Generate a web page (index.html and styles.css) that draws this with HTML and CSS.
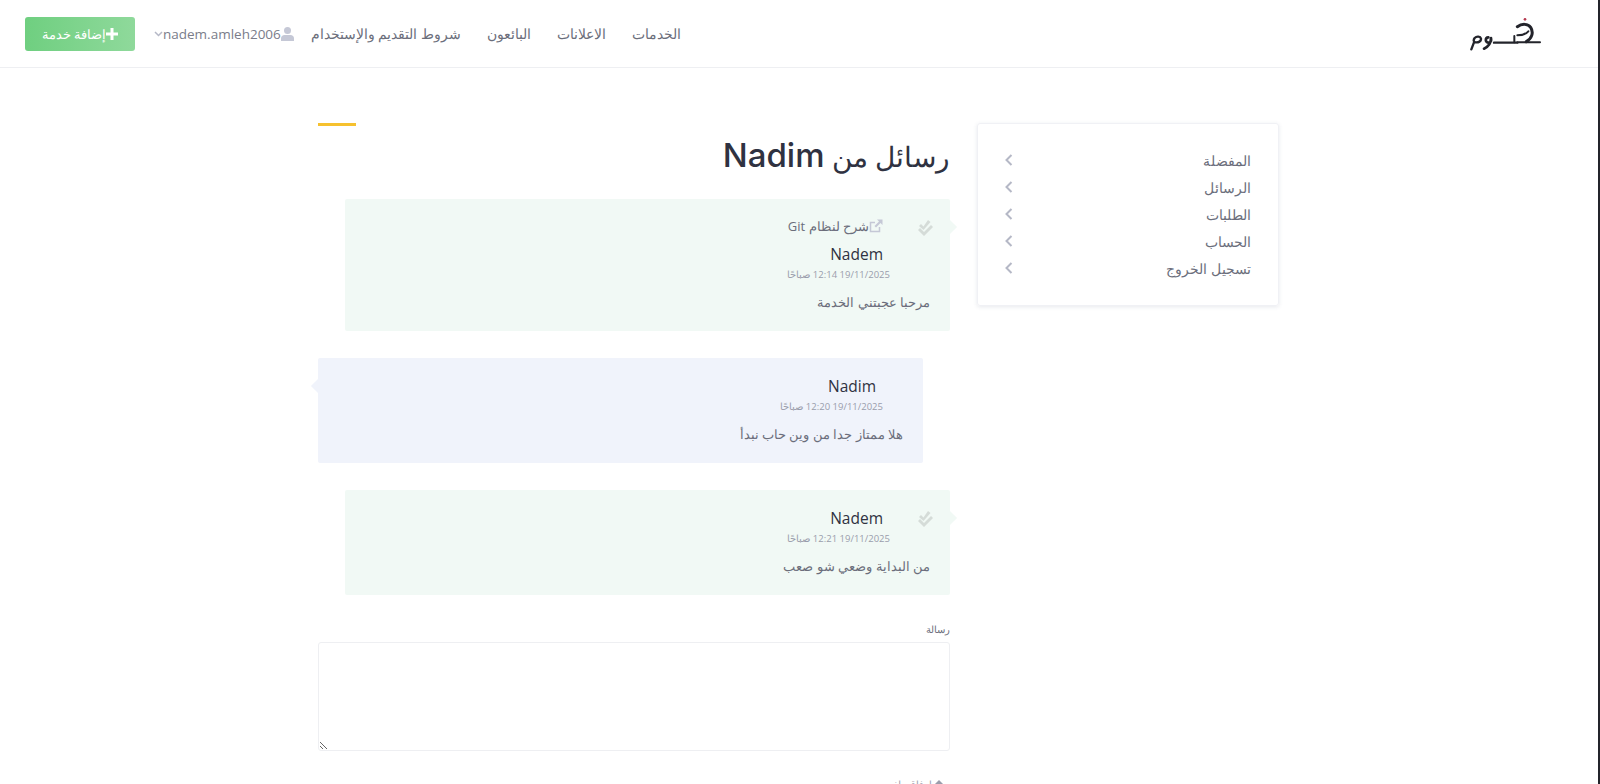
FILE: index.html
```html
<!DOCTYPE html>
<html lang="ar" dir="rtl">
<head>
    <meta charset="utf-8">
    <title>رسائل من Nadim</title>
    <link rel="stylesheet" href="styles.css">
</head>
<body>
    <!-- Top bar -->
    <header class="top-bar">
        <a class="logo" href="#" aria-label="خدوم">
            <svg width="72" height="40" viewBox="30 15 216 120">
                <g fill="none" stroke="#23242b" stroke-linecap="round" stroke-linejoin="round">
                    <path d="M102 98H172" stroke-width="7"/>
                    <path d="M163 78V97" stroke-width="6"/>
                    <path d="M172 50C186 40 204 41 212 52C222 68 215 86 199 95" stroke-width="9"/>
                    <path d="M172 76C186 76 198 72 205 64" stroke-width="6"/>
                    <path d="M172 97H240" stroke-width="6"/>
                    <path d="M85 82a8 8 0 1 0 1 16c8 0 8-8 7-14c0 14-8 26-21 32" stroke-width="8"/>
                    <path d="M44 84c6-6 17-5 19 2c1 8-8 12-16 11c-6 0-8-6-3-13zM42 97L34 118" stroke-width="7"/>
                </g>
                <circle cx="195" cy="28" r="4" fill="#b5394f"/>
            </svg>
        </a>
        <nav class="main-nav">
            <a href="#">الخدمات</a>
            <a href="#">الاعلانات</a>
            <a href="#">البائعون</a>
            <a href="#">شروط التقديم والإستخدام</a>
        </nav>
        <div class="top-actions">
            <a class="user-menu" href="#">
                <svg class="user-icon" width="13" height="14" viewBox="0 0 13 14"><circle cx="6.500" cy="3.500" r="3.500"/><path d="M0 14v-2.500C0 9.500 1.500 8 3.500 8h6c2 0 3.500 1.500 3.500 3.500V14z"/></svg>
                <span dir="ltr">nadem.amleh2006</span>
                <svg class="caret" width="9" height="6" viewBox="0 0 9 6"><path d="M1 1l3.500 3.500L8 1" fill="none" stroke-width="1.500"/></svg>
            </a>
            <a class="add-service" href="#">
                <svg width="12" height="12" viewBox="0 0 12 12"><path d="M4.500 0h3v4.500H12v3H7.500V12h-3V7.500H0v-3h4.500z"/></svg>
                إضافة خدمة
            </a>
        </div>
    </header>

    <div class="page">
        <!-- Account sidebar -->
        <aside class="side-card">
            <a href="#"><span>المفضلة</span><svg class="chev" width="8" height="12" viewBox="0 0 8 12"><path d="M6.500 1L1.500 6l5 5"/></svg></a>
            <a href="#"><span>الرسائل</span><svg class="chev" width="8" height="12" viewBox="0 0 8 12"><path d="M6.500 1L1.500 6l5 5"/></svg></a>
            <a href="#"><span>الطلبات</span><svg class="chev" width="8" height="12" viewBox="0 0 8 12"><path d="M6.500 1L1.500 6l5 5"/></svg></a>
            <a href="#"><span>الحساب</span><svg class="chev" width="8" height="12" viewBox="0 0 8 12"><path d="M6.500 1L1.500 6l5 5"/></svg></a>
            <a href="#"><span>تسجيل الخروج</span><svg class="chev" width="8" height="12" viewBox="0 0 8 12"><path d="M6.500 1L1.500 6l5 5"/></svg></a>
        </aside>

        <!-- Conversation -->
        <main class="conversation">
            <div class="title-mark"></div>
            <h1>رسائل من <span class="title-name">Nadim</span></h1>

            <div class="msg msg-own">
                <svg class="seen" width="18" height="16" viewBox="0 0 18 16"><path d="M13 0l2.500 2-7 8L4 6l2-2 2.500 2.500zM16 5l2 2-9 9-6-6 2-2 4 4z"/></svg>
                <a class="msg-link" href="#">
                    <svg width="14" height="14" viewBox="0 0 14 14"><path d="M10.500 8v4.500H1.500V3.500H6"  fill="none" stroke-width="1.500"/><path d="M8 0.500h5.500V6L11.500 4 7 8.500 5.500 7 10 2.500z" class="link-arrow"/></svg>
                    <span>شرح لنظام Git</span>
                </a>
                <div class="msg-name">Nadem</div>
                <div class="msg-date">19/11/2025 12:14 صباحًا</div>
                <p>مرحبا عجبتني الخدمة</p>
            </div>

            <div class="msg msg-other">
                <div class="msg-name">Nadim</div>
                <div class="msg-date">19/11/2025 12:20 صباحًا</div>
                <p>هلا ممتاز جدا من وين حاب نبدأ</p>
            </div>

            <div class="msg msg-own">
                <svg class="seen" width="18" height="16" viewBox="0 0 18 16"><path d="M13 0l2.500 2-7 8L4 6l2-2 2.500 2.500zM16 5l2 2-9 9-6-6 2-2 4 4z"/></svg>
                <div class="msg-name">Nadem</div>
                <div class="msg-date">19/11/2025 12:21 صباحًا</div>
                <p>من البداية وضعي شو صعب</p>
            </div>

            <form class="reply-form">
                <label for="message">رسالة</label>
                <textarea id="message"></textarea>
                <div class="attach-label">
                    <svg width="8" height="8" viewBox="0 0 8 8"><path d="M4 0l4 4H5v4H3V4H0z"/></svg>
                    إرفاق ملف
                </div>
            </form>
        </main>
    </div>
</body>
</html>
```

FILE: styles.css
```css
html {
    height: 100%;
    overflow: hidden;
}

body {
    margin: 0;
    height: 100%;
    overflow: hidden;
    background: #fff;
    font-family: "Open Sans", "Noto Sans", sans-serif;
    color: #6b6e7b;
    border-right: 2px solid #23242b;
    box-sizing: border-box;
}

a {
    color: inherit;
    text-decoration: none;
}

/* Top bar styles */
.top-bar {
    display: flex;
    align-items: center;
    height: 68px;
    padding: 0 56px 0 25px;
    border-bottom: 1px solid #eeeff2;
    box-sizing: border-box;
}

.logo {
    display: flex;
    margin: 3px 0 0 789px;
}

.main-nav {
    display: flex;
    gap: 26px;
    font-size: 14px;
    white-space: nowrap;
}

.top-actions {
    display: flex;
    align-items: center;
    gap: 19px;
    margin-right: auto;
}

.user-menu {
    display: flex;
    align-items: center;
    font-size: 13.5px;
    color: #7a7d8a;
}

.user-icon {
    fill: #c5c8d6;
}

.caret {
    stroke: #b5b8c6;
}

.add-service {
    display: flex;
    align-items: center;
    justify-content: center;
    width: 110px;
    height: 34px;
    border-radius: 3px;
    background: linear-gradient(90deg, #6fcf80, #8fd99b);
    color: #fff;
    font-size: 13px;
}

.add-service svg {
    fill: #fff;
}

/* Layout */
.page {
    display: flex;
    align-items: flex-start;
    gap: 27px;
    width: 961px;
    margin: 0 319px 0 318px;
    padding-top: 55px;
}

/* Sidebar */
.side-card {
    width: 302px;
    flex: none;
    height: 183px;
    padding: 26px 27px 0;
    box-sizing: border-box;
    display: flex;
    flex-direction: column;
    gap: 6px;
    border-radius: 3px;
    border: 1px solid #f0f1f5;
    box-shadow: 0 1px 4px rgba(60, 70, 110, 0.12);
    font-size: 14px;
}

.side-card a {
    display: flex;
    justify-content: space-between;
    align-items: center;
    height: 21px;
}

.chev {
    fill: none;
    stroke: #b5b8c6;
    stroke-width: 2;
    margin-bottom: 2px;
}

/* Conversation */
.conversation {
    flex: 1;
    min-width: 0;
}

.title-mark {
    width: 38px;
    height: 3px;
    background: #f6c12f;
    margin-right: auto;
}

h1 {
    margin: 7px 0 21px;
    font-size: 28px;
    line-height: 44px;
    font-weight: 400;
    color: #2f3241;
}

.title-name {
    font-family: Inter, sans-serif;
    font-size: 33px;
    font-weight: 500;
}

.msg {
    position: relative;
    padding: 16px 20px 17px;
    margin-bottom: 27px;
    border-radius: 2px;
    box-sizing: border-box;
    font-size: 13px;
}

.msg::after {
    content: "";
    position: absolute;
    top: 23px;
    width: 10px;
    height: 10px;
    transform: rotate(45deg);
    background: inherit;
}

.msg-own {
    background: #f1f9f5;
    margin-left: 27px;
}

.msg-own::after {
    right: -5px;
}

.msg-other {
    background: #f0f3fb;
    margin-right: 27px;
}

.msg-other::after {
    left: -5px;
}

.msg .seen {
    position: absolute;
    top: 21px;
    right: 17px;
    fill: #d5dcd8;
}

.msg-link {
    display: flex;
    align-items: center;
    height: 21px;
    margin-bottom: 6px;
    padding-right: 47px;
    font-size: 13px;
}

.msg-link svg {
    stroke: #c5c8d6;
}

.link-arrow {
    fill: #c5c8d6;
    stroke: none;
}

.msg-name {
    padding-right: 47px;
    font-size: 15.5px;
    font-weight: 500;
    line-height: 24px;
    color: #2f3241;
}

.msg-other .msg-name {
    padding-right: 27px;
}

.msg-date {
    padding-right: 40px;
    font-size: 9.5px;
    line-height: 14px;
    margin-top: 2px;
    color: #9a9dac;
}

.msg-other .msg-date {
    padding-right: 20px;
}

.msg p {
    margin: 8px 0 0;
    line-height: 24px;
}

/* Reply form */
.reply-form label {
    display: block;
    font-size: 10px;
    line-height: 14px;
    margin-bottom: 6px;
}

textarea {
    display: block;
    width: 100%;
    height: 109px;
    box-sizing: border-box;
    border: 1px solid #eeeff2;
    border-radius: 3px;
    background: #fff;
}

.attach-label {
    margin-top: 26px;
    padding-right: 7px;
    font-size: 10px;
    line-height: 14px;
    color: #9a9dac;
}

.attach-label svg {
    fill: #9a9dac;
}
```
